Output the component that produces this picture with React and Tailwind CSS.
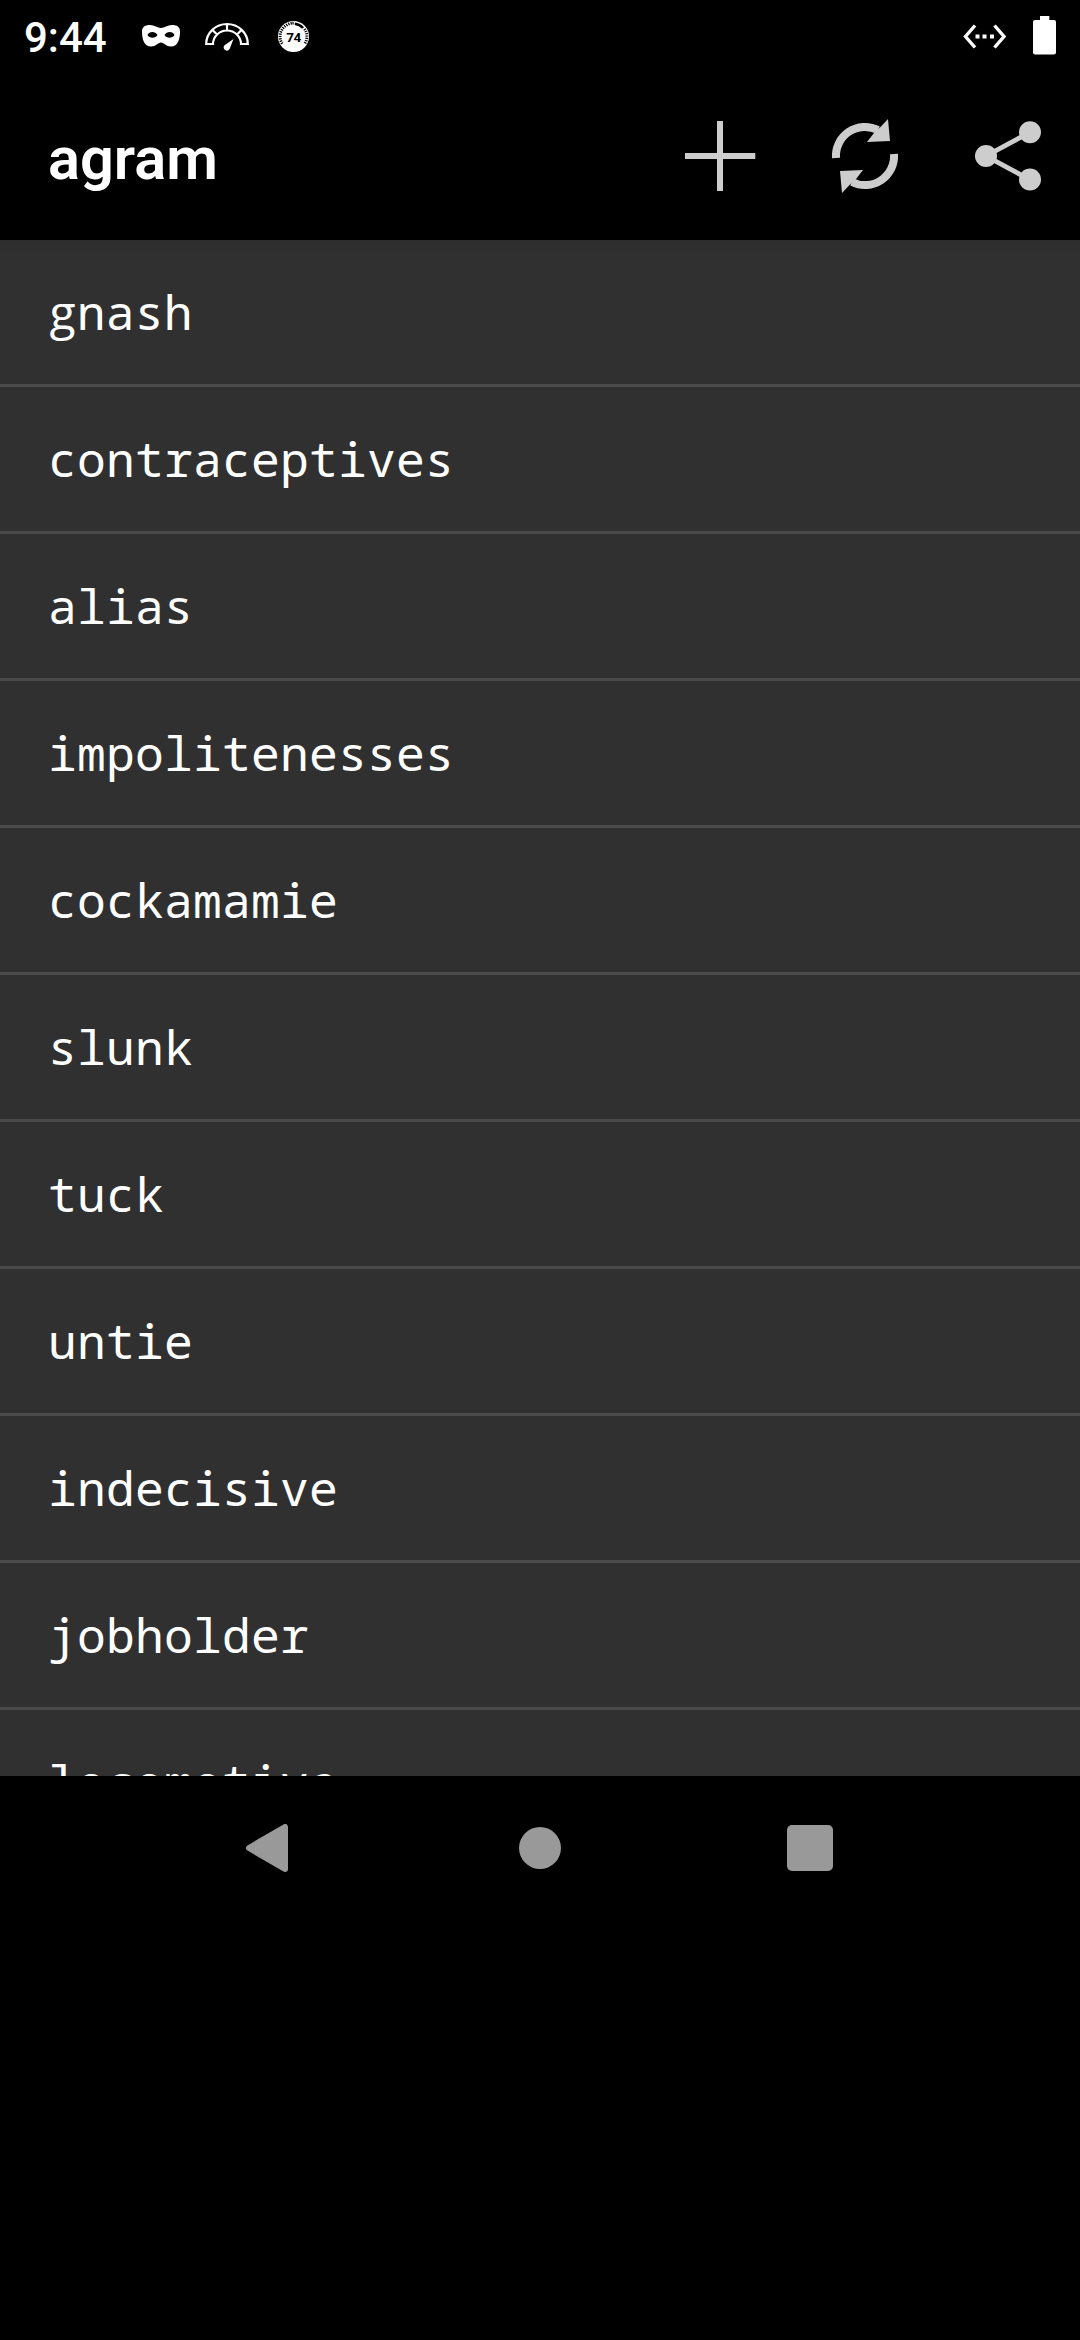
const words = [
  'gnash', 'contraceptives', 'alias', 'impolitenesses', 'cockamamie', 'slunk',
  'tuck', 'untie', 'indecisive', 'jobholder', 'locomotive',
];

const ticks = [150, 160, 170, 180, 190, 200, 210, 220, 230, 240, 250, 260, 268, 328, 338, 348, 358, 8, 18, 28];

function MaskIcon() {
  return (
    <svg className="ml-6 size-12" viewBox="137 12 48 48">
      <path
        fill="#fff"
        fillRule="evenodd"
        d="M150 25C154.500 25 157.500 28 161 28S167.500 25 172 25C177 25 180 27 180 31.500C180 39 178 46.600 171 46.600C166 46.600 164 42.600 161 42.600S156 46.600 151 46.600C144 46.600 142 39 142 31.500C142 27 145 25 150 25ZM147.500 35C149 30.900 155.500 30.900 157.500 35C155.500 38.600 149.500 38.600 147.500 35ZM164.500 35C166.500 30.900 173 30.900 174.500 35C172.500 38.600 166.500 38.600 164.500 35Z"
      />
    </svg>
  );
}

function GaugeIcon() {
  return (
    <svg className="ml-[18px] size-12" viewBox="203 12 48 48">
      <path
        fill="none"
        stroke="#fff"
        strokeWidth="2.200"
        d="M206.200 44A20.800 20 0 0 1 247.800 44H241A14 13.500 0 0 0 213 44ZM227 24V31M212 29.500L217.500 35M242 29.500L236.500 35"
      />
      <path fill="#fff" d="M233.500 39L230 48A3.200 3.200 0 1 1 224.500 45.300Z" />
    </svg>
  );
}

function ScoreIcon() {
  return (
    <svg className="ml-[19px] size-12" viewBox="270 12 48 48">
      <circle cx="293.500" cy="36.500" r="15.500" fill="#fff" />
      {ticks.map((a) => (
        <path key={a} d="M305.500 36.500H308.300" stroke="#000" strokeWidth="1.200" transform={`rotate(${a} 293.500 36.500)`} />
      ))}
      <path d="M294.800 23.800A12.800 12.800 0 0 1 303 28" fill="none" stroke="#000" strokeWidth="2.600" />
      <text x="293.600" y="41.500" textAnchor="middle" fontSize="13.500" fontWeight="700" letterSpacing="-0.500" fontFamily="Roboto, sans-serif">74</text>
    </svg>
  );
}

function StatusBar() {
  return (
    <div className="flex h-[72px] items-center pr-3 pl-6">
      <span className="w-[89px] pt-[3px] text-[42px] leading-[48px] font-medium whitespace-nowrap">9:44</span>
      <MaskIcon />
      <GaugeIcon />
      <ScoreIcon />
      <svg className="ml-auto size-12" viewBox="961 12 48 48">
        <path d="M975 25.500L965.500 36.500L975 47.500M994.500 25.500L1004 36.500L994.500 47.500" fill="none" stroke="#fff" strokeWidth="3.400" />
        <path d="M975.500 34.500h4v4h-4zM982.500 34.500h4v4h-4zM990 34.500h4v4h-4z" fill="#fff" />
      </svg>
      <svg className="ml-[11px] size-12" viewBox="1020 12 48 48">
        <path d="M1040 16H1049.300V20H1054A2 2 0 0 1 1056 22V52.500A2 2 0 0 1 1054 54.500H1035A2 2 0 0 1 1033 52.500V22A2 2 0 0 1 1035 20H1040Z" fill="#fff" />
      </svg>
    </div>
  );
}

function RefreshHalf({ transform }) {
  return (
    <g transform={transform}>
      <path d="M836 158A29 29 0 0 1 878 130" fill="none" stroke="#cdcdcd" strokeWidth="8" />
      <path d="M888 119L890 141L867 142L874 133L880.500 127Z" fill="#cdcdcd" />
    </g>
  );
}

function ActionBar() {
  return (
    <header className="flex h-[168px] items-center pl-12">
      <h1 className="mr-auto pt-[5px] text-[59.5px] leading-[72px] font-semibold">agram</h1>
      <button aria-label="Add">
        <svg className="size-36" viewBox="648 84 144 144">
          <path d="M685 156H755.300M720 121V191" stroke="#cdcdcd" strokeWidth="6" />
        </svg>
      </button>
      <button aria-label="Refresh">
        <svg className="size-36" viewBox="792 84 144 144">
          <RefreshHalf />
          <RefreshHalf transform="rotate(180 865 156)" />
        </svg>
      </button>
      <button aria-label="Share">
        <svg className="size-36" viewBox="936 84 144 144" fill="#cdcdcd">
          <path d="M1030 132.300L986 156L1030 179.700" fill="none" stroke="#cdcdcd" strokeWidth="4.800" />
          <circle cx="986" cy="156" r="11" />
          <circle cx="1030" cy="132.300" r="11" />
          <circle cx="1030" cy="179.500" r="11" />
        </svg>
      </button>
    </header>
  );
}

function NavBar() {
  return (
    <nav className="flex h-36 items-center justify-center">
      <button aria-label="Back" className="flex w-[270px] justify-center">
        <svg className="size-12" viewBox="246 1824 48 48">
          <path d="M249 1848L285 1827V1869Z" fill="#999" stroke="#999" strokeWidth="6" strokeLinejoin="round" />
        </svg>
      </button>
      <button aria-label="Home" className="flex w-[270px] justify-center">
        <span className="size-[42px] rounded-full bg-[#999]" />
      </button>
      <button aria-label="Overview" className="flex w-[270px] justify-center">
        <span className="size-[46px] rounded-[5px] bg-[#999]" />
      </button>
    </nav>
  );
}

export default function App() {
  return (
    <div className="h-[2340px] w-[1080px] overflow-hidden bg-black font-[Roboto,sans-serif] text-white">
      <StatusBar />
      <ActionBar />
      <ul className="h-[1536px] overflow-hidden bg-[#303030] bg-[linear-gradient(#2c2c2c,#303030_12px)] font-['Noto_Sans_Mono','DejaVu_Sans_Mono',monospace] text-[48px] tracking-[0.2px]">
        {words.map((w) => (
          <li
            key={w}
            className={
              w.startsWith('g')
                ? "h-[147px] border-b-[3px] border-[#4a4a4a] pl-12 leading-[144px] first-letter:mr-[1px] first-letter:ml-[1.5px] first-letter:font-['Open_Sans'] first-letter:leading-none"
                : 'h-[147px] border-b-[3px] border-[#4a4a4a] pl-12 leading-[144px]'
            }
          >
            {w}
          </li>
        ))}
      </ul>
      <NavBar />
    </div>
  );
}
